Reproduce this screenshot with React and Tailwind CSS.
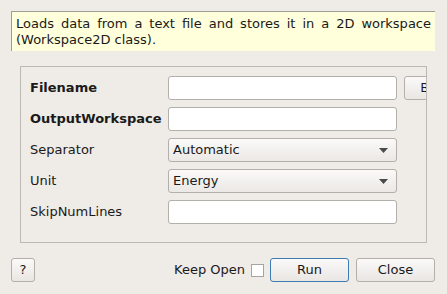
import React from "react";

const font = { fontFamily: "'DejaVu Sans', sans-serif" };

const TextBox = () => (
  <div className="h-[24px] w-[229px] shrink-0 rounded-[3px] border border-[#b3afaa] bg-white" />
);

const Combo = ({ value }) => (
  <div className="h-[24px] w-[229px] shrink-0 rounded-[3px] border border-[#b3afaa] bg-gradient-to-b from-[#fbfaf9] to-[#ebe8e5] flex items-center justify-between pl-[4px] pr-[8px]">
    <span>{value}</span>
    <svg width="9" height="5" viewBox="0 0 9 5">
      <path d="M0 0h9L4.5 5z" fill="#4a4a4a" />
    </svg>
  </div>
);

const Row = ({ label, bold, children }) => (
  <div className="flex items-center h-[24px]">
    <div className={`w-[138px] shrink-0 ${bold ? "font-bold" : ""}`}>{label}</div>
    {children}
  </div>
);

const Btn = ({ children, className = "" }) => (
  <div
    className={`h-[24px] shrink-0 rounded-[3px] border flex items-center justify-center bg-gradient-to-b from-[#fbfaf9] to-[#e9e6e3] ${className}`}
  >
    {children}
  </div>
);

export default function App() {
  return (
    <div
      className="w-[447px] h-[294px] bg-[#efebe7] text-[13px] text-[#1a1a1a] flex flex-col pt-[11px] px-[11px] overflow-hidden"
      style={font}
    >
      {/* Description */}
      <div className="h-[40px] w-[424px] border-l border-t border-[#9f9c98] bg-[#ffffdc] px-[4px] pt-[4px] leading-[16px] text-justify">
        Loads data from a text file and stores it in a 2D workspace (Workspace2D class).
      </div>

      {/* Properties */}
      <div className="ml-[9px] mt-[15px] w-[407px] h-[177px] border border-[#bcb8b3] pt-[9px] pl-[9px] overflow-hidden flex flex-col gap-[7px]">
        <Row label="Filename" bold>
          <TextBox />
          <Btn className="ml-[7px] w-[80px] border-[#b3afaa]">Browse</Btn>
        </Row>
        <Row label="OutputWorkspace" bold>
          <TextBox />
        </Row>
        <Row label="Separator">
          <Combo value="Automatic" />
        </Row>
        <Row label="Unit">
          <Combo value="Energy" />
        </Row>
        <Row label="SkipNumLines">
          <TextBox />
        </Row>
      </div>

      {/* Buttons */}
      <div className="mt-[15px] mr-[1px] flex items-center">
        <Btn className="w-[24px] border-[#b3afaa]">?</Btn>
        <div className="ml-auto flex items-center">
          <span>Keep Open</span>
          <div className="ml-[6px] w-[13px] h-[13px] border border-[#a8a4a0] bg-white" />
          <Btn className="ml-[6px] w-[79px] border-[#3d7cb3] from-[#f6f8fa] to-[#dde3e8]">Run</Btn>
          <Btn className="ml-[7px] w-[79px] border-[#b3afaa]">Close</Btn>
        </div>
      </div>
    </div>
  );
}
